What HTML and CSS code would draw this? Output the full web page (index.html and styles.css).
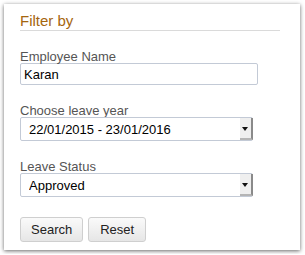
FILE: index.html
```html
<!DOCTYPE html>
<html lang="en">
<head>
    <meta charset="UTF-8">
    <meta name="viewport" content="width=device-width, initial-scale=1.0">
    <title>Filter by</title>
    <link rel="stylesheet" href="styles.css">
</head>
<body>

<div class="panel">
    <h2>Filter by</h2>
    <div class="row">
        <label for="employee">Employee Name</label>
        <input type="text" id="employee" value="Karan">
    </div>
    <div class="row">
        <label for="year">Choose leave year</label>
        <div class="select">
            <select id="year">
                <option>22/01/2015 - 23/01/2016</option>
            </select>
        </div>
    </div>
    <div class="row">
        <label for="status">Leave Status</label>
        <div class="select">
            <select id="status">
                <option>Approved</option>
            </select>
        </div>
    </div>
    <div class="buttons">
        <button>Search</button>
        <button class="reset">Reset</button>
    </div>
</div>

</body>
</html>
```
FILE: styles.css
```css
body {
    font-family: "Liberation Sans", Arial, sans-serif;
    background-color: #fff;
    margin: 0;
    padding: 4px;
}
.panel {
    width: 296px;
    height: 246px;
    box-sizing: border-box;
    padding: 8px 20px 0 16px;
    background-color: #fff;
    box-shadow: 0 1px 4px rgba(0, 0, 0, 0.6);
}
h2 {
    margin: 0;
    font-size: 15px;
    font-weight: normal;
    line-height: 18px;
    color: #a5660e;
    border-bottom: 1px solid #dadada;
}
.row {
    margin-top: 19px;
}
label {
    display: block;
    font-size: 13px;
    line-height: 13px;
    color: #555;
}
input, select {
    display: block;
    box-sizing: border-box;
    margin: 0;
    font-family: inherit;
    font-size: 13px;
    color: #000;
    background-color: #fff;
    border: 1px solid #c3cad6;
    border-radius: 2px;
}
input {
    width: 238px;
    height: 22px;
    padding: 0 3px;
    outline: none;
}
.select {
    position: relative;
    width: 233px;
}
select {
    width: 100%;
    height: 24px;
    padding: 0 0 0 8px;
    appearance: none;
    -webkit-appearance: none;
}
.select::after {
    content: "";
    position: absolute;
    top: 1px;
    right: 0;
    width: 11px;
    height: 20px;
    background-color: #efefef;
    border-right: 2px solid #8a8a8a;
    border-bottom: 2px solid #b5b5b5;
    pointer-events: none;
}
.select::before {
    content: "";
    position: absolute;
    top: 10px;
    right: 5px;
    border-left: 3px solid transparent;
    border-right: 3px solid transparent;
    border-top: 4px solid #111;
    z-index: 1;
    pointer-events: none;
}
.buttons {
    display: flex;
    gap: 5px;
    margin-top: 20px;
}
button {
    height: 25px;
    font-family: inherit;
    font-size: 13px;
    color: #222;
    padding: 0 10px;
    border: 1px solid #cfcfcf;
    border-radius: 3px;
    background: linear-gradient(#fafafa, #e6e6e6);
    cursor: pointer;
}
.reset {
    padding: 0 11px;
}
```
